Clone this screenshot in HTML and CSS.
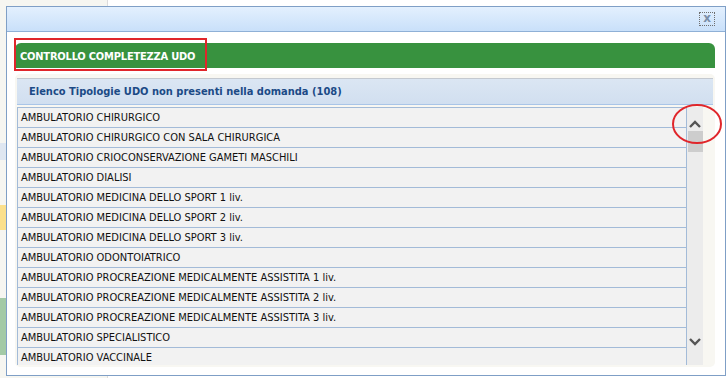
FILE: index.html
```html
<!DOCTYPE html>
<html lang="it">
<head>
    <meta charset="UTF-8">
    <title>Controllo completezza UDO</title>
    <link rel="stylesheet" href="styles.css">
</head>
<body>
    <div class="page">
        <div class="page-side">
            <div class="band band-blue"></div>
            <div class="band band-yellow"></div>
            <div class="band band-green"></div>
        </div>
        <div class="page-main"></div>
    </div>

    <div class="dialog">
        <div class="dialog-titlebar">
            <span class="dialog-close">x</span>
        </div>
        <div class="dialog-body">
            <div class="section-head">
                CONTROLLO COMPLETEZZA UDO
                <span class="mark-box"></span>
            </div>
            <div class="panel">
                <div class="panel-head">Elenco Tipologie UDO non presenti nella domanda (108)</div>
                <div class="grid">
                    <ul class="rows">
                        <li>AMBULATORIO CHIRURGICO</li>
                        <li>AMBULATORIO CHIRURGICO CON SALA CHIRURGICA</li>
                        <li>AMBULATORIO CRIOCONSERVAZIONE GAMETI MASCHILI</li>
                        <li>AMBULATORIO DIALISI</li>
                        <li>AMBULATORIO MEDICINA DELLO SPORT 1 liv.</li>
                        <li>AMBULATORIO MEDICINA DELLO SPORT 2 liv.</li>
                        <li>AMBULATORIO MEDICINA DELLO SPORT 3 liv.</li>
                        <li>AMBULATORIO ODONTOIATRICO</li>
                        <li>AMBULATORIO PROCREAZIONE MEDICALMENTE ASSISTITA 1 liv.</li>
                        <li>AMBULATORIO PROCREAZIONE MEDICALMENTE ASSISTITA 2 liv.</li>
                        <li>AMBULATORIO PROCREAZIONE MEDICALMENTE ASSISTITA 3 liv.</li>
                        <li>AMBULATORIO SPECIALISTICO</li>
                        <li>AMBULATORIO VACCINALE</li>
                    </ul>
                    <div class="scrollbar">
                        <svg class="arrow" width="14" height="10" viewBox="0 0 14 10"><path d="M2 8 L7 3 L12 8" fill="none" stroke="#555" stroke-width="2.4"/></svg>
                        <div class="thumb"></div>
                        <div class="track"></div>
                        <svg class="arrow" width="14" height="10" viewBox="0 0 14 10"><path d="M2 2 L7 7 L12 2" fill="none" stroke="#555" stroke-width="2.4"/></svg>
                    </div>
                </div>
            </div>
            <svg class="mark-ring" width="52" height="42" viewBox="0 0 52 42"><ellipse cx="26" cy="21" rx="24" ry="19" fill="none" stroke="#e0262b" stroke-width="2"/></svg>
        </div>
    </div>
</body>
</html>
```

FILE: styles.css
```css
body {
    margin: 0;
    font-family: Tahoma, "DejaVu Sans Condensed", sans-serif;
    font-size: 11px;
    background-color: #fff;
}

.page {
    display: flex;
    height: 378px;
}

.page-side {
    width: 107px;
    background-color: #f6f6f1;
    border-right: 1px solid #dcdcdc;
    position: relative;
}

.band { position: absolute; left: 0; width: 100%; }
.band-blue { top: 143px; height: 17px; background: #dfe7f1; }
.band-yellow { top: 205px; height: 25px; background: #fbe08c; }
.band-green { top: 298px; height: 57px; background: #a3caa6; }

.page-main { flex: 1; }

.dialog {
    position: absolute;
    left: 6px;
    top: 6px;
    width: 718px;
    height: 368px;
    border: 1px solid #7f9fc6;
    background-color: #fff;
    display: flex;
    flex-direction: column;
}

.dialog-titlebar {
    height: 24px;
    background: linear-gradient(to bottom, #e3f0fe 0%, #c9e0fa 100%);
    border-bottom: 1px solid #8fb0d6;
    display: flex;
    justify-content: flex-end;
    align-items: center;
    padding-right: 10px;
}

.dialog-close {
    width: 14px;
    height: 12px;
    border: 1px dotted #6f6f6f;
    color: #7b8ea8;
    font: bold 12px/11px "DejaVu Sans", sans-serif;
    text-align: center;
}

.dialog-body {
    position: relative;
    flex: 1;
    padding: 11px 10px 0 8px;
}

.section-head {
    position: relative;
    height: 25px;
    background-color: #38923f;
    border-radius: 6px 6px 0 0;
    color: #fff;
    font: bold 11px/27px "Liberation Sans Narrow", "DejaVu Sans Condensed", sans-serif;
    letter-spacing: -0.2px;
    padding-left: 5px;
}

.mark-box {
    position: absolute;
    left: -1px;
    top: -5px;
    width: 189px;
    height: 29px;
    border: 2px solid #e0262b;
}

.panel {
    margin-top: 6px;
    height: 293px;
    background-color: #f8f7f2;
    border-radius: 5px;
    padding: 4px 2px 0 2px;
    box-sizing: border-box;
}

.panel-head {
    height: 25px;
    background: linear-gradient(to bottom, #dbe6f3, #d1dff0);
    border-top: 1px solid #c4c9d0;
    border-bottom: 1px solid #a9c5e8;
    color: #1b4a86;
    font-weight: bold;
    line-height: 26px;
    padding-left: 12px;
}

.grid {
    display: flex;
    margin-top: 2px;
    height: 258px;
    overflow: hidden;
    margin-right: 10px;
}

.rows {
    list-style: none;
    margin: 0;
    padding: 0;
    flex: 1;
    border-left: 1px solid #a3bbd8;
    border-right: 1px solid #a3bbd8;
    border-top: 1px solid #a3bbd8;
    background-color: #f2f2f2;
}

.rows li {
    height: 19px;
    line-height: 20px;
    border-bottom: 1px solid #a3bbd8;
    padding-left: 3px;
    color: #111;
    white-space: nowrap;
}

.scrollbar {
    width: 16px;
    background-color: #ececec;
    display: flex;
    flex-direction: column;
    align-items: center;
}

.arrow { margin-top: 12px; }
.scrollbar .arrow:last-child { margin: 0 0 18px 0; }

.thumb {
    width: 15px;
    height: 21px;
    margin-top: 2px;
    background-color: #cdcdcd;
}

.track { flex: 1; }

.mark-ring {
    position: absolute;
    left: 664px;
    top: 71px;
}
```
